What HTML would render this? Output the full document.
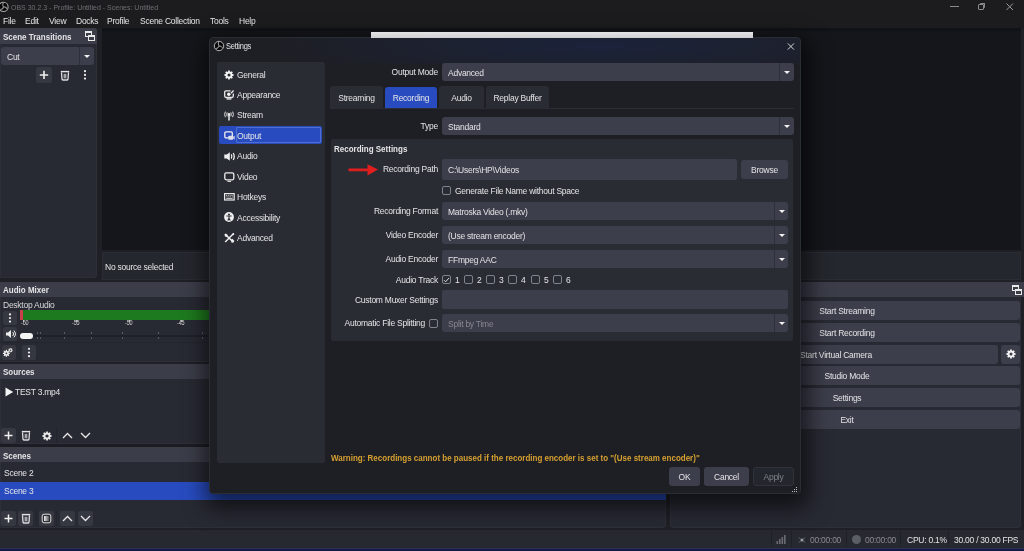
<!DOCTYPE html>
<html><head><meta charset="utf-8">
<style>
*{box-sizing:border-box;margin:0;padding:0}
html,body{-webkit-font-smoothing:antialiased;width:1024px;height:551px;overflow:hidden;background:#1f2026;font-family:"Liberation Sans",sans-serif;font-size:8.5px;letter-spacing:-0.25px;color:#e4e4e6}
.a{position:absolute}
svg.a{overflow:visible}
.t{position:absolute;white-space:nowrap;line-height:10px;will-change:transform;transform:scaleY(1.15);transform-origin:0 45%;margin-top:-1px}
.b{font-weight:bold;font-size:8px;letter-spacing:0;margin-top:1.8px}
.dock{position:absolute;background:#282a33;border:1px solid #2e3039}
.hdr{position:absolute;background:#3b3d49}
.fld{position:absolute;background:#3c3e4b;border-radius:3px}
.btn{position:absolute;background:#3c3e4b;border-radius:3px}
.tb{position:absolute;background:#363841;border-radius:2px}
.arr{position:absolute;width:0;height:0;border-left:3px solid transparent;border-right:3px solid transparent;border-top:3px solid #f2f2f2}
.csep{position:absolute;width:1px;background:#2e3039}
.cb{position:absolute;width:9px;height:9px;border:1px solid #80838b;border-radius:2px}
.ic{position:absolute;overflow:visible}
</style></head><body>

<!-- title + menu bar -->
<div class="a" style="left:0;top:0;width:1024px;height:28px;background:#1c1c1f"></div>
<svg class="a" style="left:0;top:0" width="12" height="14"><circle cx="3.5" cy="6.9" r="4.6" fill="#060606" stroke="#a8a8a8" stroke-width="1.1"/><path d="M3.5 6.9Q2.1 5.1 3.3 2.6M3.5 6.9Q5.9 6.5 7.1 8.9M3.5 6.9Q3.1 9.3 0.3 9.5" stroke="#8c8c8c" stroke-width="1.2" fill="none"/></svg>
<div class="t" style="left:11px;top:3.6px;font-size:7px;letter-spacing:0;color:#707074">OBS 30.2.3 - Profile: Untitled - Scenes: Untitled</div>
<div class="a" style="left:950px;top:6px;width:9px;height:1px;background:#8a8a8a"></div>
<div class="a" style="left:978px;top:4px;width:6px;height:6px;border:1px solid #8a8a8a;border-radius:1px"></div>
<div class="a" style="left:980px;top:3px;width:5px;height:5px;border-top:1px solid #8a8a8a;border-right:1px solid #8a8a8a;border-radius:1px"></div>
<svg class="a" style="left:1006px;top:3px" width="8" height="8" viewBox="0 0 8 8"><path d="M0.5 0.5L7 7M7 0.5L0.5 7" stroke="#9a9a9a" stroke-width="1"/></svg>

<div class="t" style="left:3px;top:16px">File</div>
<div class="t" style="left:25px;top:16px">Edit</div>
<div class="t" style="left:49px;top:16px">View</div>
<div class="t" style="left:76px;top:16px">Docks</div>
<div class="t" style="left:107px;top:16px">Profile</div>
<div class="t" style="left:140px;top:16px">Scene Collection</div>
<div class="t" style="left:210px;top:16px">Tools</div>
<div class="t" style="left:239px;top:16px">Help</div>

<!-- main dark bg -->
<div class="a" style="left:0;top:28px;width:1024px;height:521px;background:#1f2026"></div>

<!-- Scene transitions dock -->
<div class="dock" style="left:0;top:28px;width:97px;height:250px;border-radius:0 3px 3px 0"></div>
<div class="hdr" style="left:0;top:28px;width:97px;height:16px;border-radius:0 3px 0 0"></div>
<div class="t b" style="left:3px;top:31px">Scene Transitions</div>
<svg class="ic" style="left:84px;top:30px" width="12" height="12" viewBox="0 0 12 12"><rect x="1.5" y="1.5" width="6" height="5" fill="none" stroke="#e8e8e8" stroke-width="1"/><rect x="1" y="1" width="7" height="2" fill="#e8e8e8"/><rect x="4.5" y="5.5" width="6" height="5" fill="#3b3d49" stroke="#e8e8e8" stroke-width="1"/><rect x="4" y="5" width="7" height="2" fill="#e8e8e8"/></svg>
<div class="fld" style="left:1px;top:47px;width:93px;height:18px"></div>
<div class="csep" style="left:79px;top:47px;height:18px"></div>
<div class="arr" style="left:84px;top:55px"></div>
<div class="t" style="left:7px;top:52px">Cut</div>
<div class="tb" style="left:36px;top:67px;width:16px;height:16px"></div>
<svg class="ic" style="left:36px;top:67px" width="16" height="16"><path d="M8 3.8V12M3.8 8H12.2" stroke="#f0f0f0" stroke-width="1.6"/></svg>
<svg class="ic" style="left:60px;top:70px" width="10" height="11"><path d="M0.8 1.6H9.2" stroke="#e4e4e6" stroke-width="1.4"/><path d="M1.5 2.4L2 9.2Q2.1 10 2.9 10H7.1Q7.9 10 8 9.2L8.5 2.4" fill="none" stroke="#dcdce0" stroke-width="1.3"/><rect x="3.6" y="3.9" width="2.8" height="4.4" fill="#a4a6ac"/></svg>
<svg class="ic" style="left:83px;top:69px" width="4" height="12"><circle cx="2" cy="2.2" r="1.1" fill="#f0f0f0"/><circle cx="2" cy="5.9" r="1.1" fill="#f0f0f0"/><circle cx="2" cy="9.6" r="1.1" fill="#f0f0f0"/></svg>

<!-- preview -->
<div class="a" style="left:102px;top:28px;width:919px;height:222px;background:#15161b"></div><div class="a" style="left:102px;top:28px;width:919px;height:3px;background:#111217"></div>

<div class="a" style="left:102px;top:252px;width:919px;height:28px;background:#25272e;border:1px solid #2b2d35"></div>
<div class="t" style="left:105px;top:262px">No source selected</div>

<!-- Audio mixer -->
<div class="dock" style="left:0;top:282px;width:666px;height:80px"></div>
<div class="hdr" style="left:0;top:282px;width:666px;height:15px"></div>
<div class="t b" style="left:3px;top:284px">Audio Mixer</div>
<div class="t" style="left:3px;top:300px;color:#d8d8da">Desktop Audio</div>
<div class="tb" style="left:3px;top:311px;width:14px;height:14px"></div>
<svg class="ic" style="left:3px;top:311px" width="14" height="14"><circle cx="7" cy="3.4" r="1.1" fill="#eee"/><circle cx="7" cy="7" r="1.1" fill="#eee"/><circle cx="7" cy="10.6" r="1.1" fill="#eee"/></svg>
<div class="a" style="left:20px;top:310px;width:190px;height:10px;background:#1e7a1e"></div>
<div class="a" style="left:20px;top:310px;width:3px;height:10px;background:#c8404a"></div>
<div class="a" style="left:23px;top:320px;width:1px;height:2px;background:#bbb"></div>
<div class="a" style="left:76px;top:320px;width:1px;height:2px;background:#bbb"></div>
<div class="a" style="left:129px;top:320px;width:1px;height:2px;background:#bbb"></div>
<div class="a" style="left:181px;top:320px;width:1px;height:2px;background:#bbb"></div>
<div class="t" style="left:21px;top:320px;font-size:5.5px;letter-spacing:-0.2px;line-height:8px;color:#d0d0d0">-60</div>
<div class="t" style="left:72px;top:320px;font-size:5.5px;letter-spacing:-0.2px;line-height:8px;color:#d0d0d0">-55</div>
<div class="t" style="left:125px;top:320px;font-size:5.5px;letter-spacing:-0.2px;line-height:8px;color:#d0d0d0">-50</div>
<div class="t" style="left:177px;top:320px;font-size:5.5px;letter-spacing:-0.2px;line-height:8px;color:#d0d0d0">-45</div>
<div class="tb" style="left:3px;top:327px;width:14px;height:14px"></div>
<svg class="ic" style="left:3px;top:327px" width="14" height="14"><path d="M3 5.5H5L8 3V11L5 8.5H3Z" fill="#eee"/><path d="M9.5 5a2.5 2.5 0 0 1 0 4M10.8 3.6a4.4 4.4 0 0 1 0 6.8" stroke="#eee" stroke-width="1" fill="none"/></svg>
<div class="a" style="left:20px;top:335px;width:190px;height:2px;background:#1f2128"></div>
<div class="a" style="left:37px;top:332px;width:1px;height:2px;background:#5a5c64"></div><div class="a" style="left:37px;top:337px;width:1px;height:2px;background:#5a5c64"></div><div class="a" style="left:40px;top:332px;width:1px;height:2px;background:#5a5c64"></div><div class="a" style="left:40px;top:337px;width:1px;height:2px;background:#5a5c64"></div><div class="a" style="left:64px;top:332px;width:1px;height:2px;background:#5a5c64"></div><div class="a" style="left:64px;top:337px;width:1px;height:2px;background:#5a5c64"></div><div class="a" style="left:91px;top:332px;width:1px;height:2px;background:#5a5c64"></div><div class="a" style="left:91px;top:337px;width:1px;height:2px;background:#5a5c64"></div><div class="a" style="left:122px;top:332px;width:1px;height:2px;background:#5a5c64"></div><div class="a" style="left:122px;top:337px;width:1px;height:2px;background:#5a5c64"></div><div class="a" style="left:158px;top:332px;width:1px;height:2px;background:#5a5c64"></div><div class="a" style="left:158px;top:337px;width:1px;height:2px;background:#5a5c64"></div><div class="a" style="left:202px;top:332px;width:1px;height:2px;background:#5a5c64"></div><div class="a" style="left:202px;top:337px;width:1px;height:2px;background:#5a5c64"></div><div class="a" style="left:20px;top:333px;width:13px;height:6px;background:#f4f4f4;border-radius:3px"></div>
<div class="a" style="left:0;top:342px;width:210px;height:1px;background:#23252c"></div>
<div class="tb" style="left:2px;top:344.5px;width:14px;height:15px"></div>
<svg class="ic" style="left:0;top:342px" width="16" height="18"><path d="M8.82 10.66 L9.84 10.67 L9.84 11.93 L8.82 11.94 L8.56 12.56 L9.28 13.29 L8.39 14.18 L7.66 13.46 L7.04 13.72 L7.03 14.74 L5.77 14.74 L5.76 13.72 L5.14 13.46 L4.41 14.18 L3.52 13.29 L4.24 12.56 L3.98 11.94 L2.96 11.93 L2.96 10.67 L3.98 10.66 L4.24 10.04 L3.52 9.31 L4.41 8.42 L5.14 9.14 L5.76 8.88 L5.77 7.86 L7.03 7.86 L7.04 8.88 L7.66 9.14 L8.39 8.42 L9.28 9.31 L8.56 10.04Z M5.50 11.30 a0.90 0.90 0 1 0 1.80 0 a0.90 0.90 0 1 0 -1.80 0Z" fill="#eee" fill-rule="evenodd"/><path d="M12.03 7.73 L12.65 7.75 L12.65 8.65 L12.03 8.67 L11.82 9.11 L12.20 9.60 L11.49 10.16 L11.09 9.69 L10.61 9.80 L10.46 10.40 L9.58 10.20 L9.70 9.59 L9.32 9.28 L8.76 9.54 L8.36 8.73 L8.92 8.44 L8.92 7.96 L8.36 7.67 L8.76 6.86 L9.32 7.12 L9.70 6.81 L9.58 6.20 L10.46 6.00 L10.61 6.60 L11.09 6.71 L11.49 6.24 L12.20 6.80 L11.82 7.29Z M9.70 8.20 a0.80 0.80 0 1 0 1.60 0 a0.80 0.80 0 1 0 -1.60 0Z" fill="#eee" fill-rule="evenodd"/></svg>
<div class="tb" style="left:22px;top:345px;width:14px;height:15px"></div>
<svg class="ic" style="left:22px;top:345px" width="14" height="15"><circle cx="7" cy="3.8" r="1.1" fill="#eee"/><circle cx="7" cy="7.5" r="1.1" fill="#eee"/><circle cx="7" cy="11.2" r="1.1" fill="#eee"/></svg>

<!-- Sources -->
<div class="dock" style="left:0;top:364px;width:666px;height:80px"></div>
<div class="hdr" style="left:0;top:364px;width:666px;height:15px"></div>
<div class="t b" style="left:3px;top:366px">Sources</div>
<svg class="ic" style="left:5px;top:387px" width="10" height="10"><path d="M0.5 0.5L8.2 5L0.5 9.5Z" fill="#f4f4f4"/></svg>
<div class="t" style="left:15px;top:387px">TEST 3.mp4</div>
<div class="tb" style="left:1px;top:428px;width:15px;height:15px"></div>
<svg class="ic" style="left:1px;top:428px" width="15" height="15"><path d="M7.5 3.5V11.5M3.5 7.5H11.5" stroke="#f0f0f0" stroke-width="1.5"/></svg>
<svg class="ic" style="left:20.5px;top:430px" width="10" height="11"><path d="M0.8 1.6H9.2" stroke="#e4e4e6" stroke-width="1.4"/><path d="M1.5 2.4L2 9.2Q2.1 10 2.9 10H7.1Q7.9 10 8 9.2L8.5 2.4" fill="none" stroke="#dcdce0" stroke-width="1.3"/><rect x="3.6" y="3.9" width="2.8" height="4.4" fill="#a4a6ac"/></svg>
<svg class="ic" style="left:41.5px;top:430.5px" width="10" height="10"><path d="M8.38 4.10 L9.62 4.16 L9.62 5.84 L8.38 5.90 L8.03 6.76 L8.87 7.67 L7.67 8.87 L6.76 8.03 L5.90 8.38 L5.84 9.62 L4.16 9.62 L4.10 8.38 L3.24 8.03 L2.33 8.87 L1.13 7.67 L1.97 6.76 L1.62 5.90 L0.38 5.84 L0.38 4.16 L1.62 4.10 L1.97 3.24 L1.13 2.33 L2.33 1.13 L3.24 1.97 L4.10 1.62 L4.16 0.38 L5.84 0.38 L5.90 1.62 L6.76 1.97 L7.67 1.13 L8.87 2.33 L8.03 3.24Z M3.40 5.00 a1.60 1.60 0 1 0 3.20 0 a1.60 1.60 0 1 0 -3.20 0Z" fill="#e8e8e8" fill-rule="evenodd"/></svg>
<div class="a" style="left:56px;top:428px;width:1px;height:15px;background:#23252c"></div>
<svg class="ic" style="left:62px;top:432px" width="11" height="7"><path d="M1 6L5.5 1.5L10 6" stroke="#e8e8e8" stroke-width="1.3" fill="none"/></svg>
<svg class="ic" style="left:80px;top:432px" width="11" height="7"><path d="M1 1L5.5 5.5L10 1" stroke="#e8e8e8" stroke-width="1.3" fill="none"/></svg>
<div class="a" style="left:0;top:444px;width:666px;height:3px;background:#1c1d22"></div>

<!-- Scenes -->
<div class="dock" style="left:0;top:447px;width:666px;height:81px;border-radius:0 0 3px 0"></div>
<div class="hdr" style="left:0;top:447px;width:666px;height:15px"></div>
<div class="t b" style="left:3px;top:450px">Scenes</div>
<div class="t" style="left:4px;top:468px">Scene 2</div>
<div class="a" style="left:0;top:482px;width:666px;height:18px;background:#284cc0"></div>
<div class="t" style="left:4px;top:486px">Scene 3</div>
<div class="tb" style="left:1px;top:511px;width:15px;height:15px"></div>
<svg class="ic" style="left:1px;top:511px" width="15" height="15"><path d="M7.5 3.5V11.5M3.5 7.5H11.5" stroke="#f0f0f0" stroke-width="1.5"/></svg>
<div class="tb" style="left:18px;top:511px;width:15px;height:15px"></div>
<svg class="ic" style="left:20.5px;top:513px" width="10" height="11"><path d="M0.8 1.6H9.2" stroke="#e4e4e6" stroke-width="1.4"/><path d="M1.5 2.4L2 9.2Q2.1 10 2.9 10H7.1Q7.9 10 8 9.2L8.5 2.4" fill="none" stroke="#dcdce0" stroke-width="1.3"/><rect x="3.6" y="3.9" width="2.8" height="4.4" fill="#a4a6ac"/></svg>
<div class="a" style="left:36px;top:511px;width:1px;height:15px;background:#23252c"></div>
<div class="tb" style="left:39px;top:511px;width:15px;height:15px"></div>
<svg class="ic" style="left:39px;top:511px" width="15" height="15"><defs><linearGradient id="g1"><stop offset="0" stop-color="#eee"/><stop offset="1" stop-color="#555"/></linearGradient></defs><rect x="3.2" y="3.2" width="8.6" height="8.6" rx="1.8" fill="#2c2e36" stroke="#e0e0e0" stroke-width="1"/><rect x="5" y="5" width="5" height="5" fill="url(#g1)"/></svg>
<div class="a" style="left:56px;top:511px;width:1px;height:15px;background:#23252c"></div>
<div class="tb" style="left:60px;top:511px;width:15px;height:15px"></div>
<svg class="ic" style="left:62px;top:515px" width="11" height="7"><path d="M1 6L5.5 1.5L10 6" stroke="#e8e8e8" stroke-width="1.3" fill="none"/></svg>
<div class="tb" style="left:78px;top:511px;width:15px;height:15px"></div>
<svg class="ic" style="left:80px;top:515px" width="11" height="7"><path d="M1 1L5.5 5.5L10 1" stroke="#e8e8e8" stroke-width="1.3" fill="none"/></svg>

<!-- Controls -->
<div class="dock" style="left:670px;top:282px;width:351px;height:246px;border-radius:0 0 3px 3px"></div>
<div class="hdr" style="left:670px;top:282px;width:354px;height:15px"></div>
<svg class="ic" style="left:1011px;top:284px" width="12" height="12" viewBox="0 0 12 12"><rect x="1.5" y="1.5" width="6" height="5" fill="none" stroke="#e8e8e8" stroke-width="1"/><rect x="1" y="1" width="7" height="2" fill="#e8e8e8"/><rect x="4.5" y="5.5" width="6" height="5" fill="#3b3d49" stroke="#e8e8e8" stroke-width="1"/><rect x="4" y="5" width="7" height="2" fill="#e8e8e8"/></svg>
<div class="btn" style="left:674px;top:301px;width:346px;height:19px"></div>
<div class="t" style="left:674px;top:306px;width:346px;text-align:center">Start Streaming</div>
<div class="btn" style="left:674px;top:323px;width:346px;height:19px"></div>
<div class="t" style="left:674px;top:328px;width:346px;text-align:center">Start Recording</div>
<div class="btn" style="left:674px;top:345px;width:324px;height:19px"></div>
<div class="t" style="left:674px;top:350px;width:324px;text-align:center">Start Virtual Camera</div>
<div class="btn" style="left:1001px;top:345px;width:19px;height:19px"></div>
<svg class="ic" style="left:1005.5px;top:349px" width="10" height="10"><path d="M8.38 4.10 L9.62 4.16 L9.62 5.84 L8.38 5.90 L8.03 6.76 L8.87 7.67 L7.67 8.87 L6.76 8.03 L5.90 8.38 L5.84 9.62 L4.16 9.62 L4.10 8.38 L3.24 8.03 L2.33 8.87 L1.13 7.67 L1.97 6.76 L1.62 5.90 L0.38 5.84 L0.38 4.16 L1.62 4.10 L1.97 3.24 L1.13 2.33 L2.33 1.13 L3.24 1.97 L4.10 1.62 L4.16 0.38 L5.84 0.38 L5.90 1.62 L6.76 1.97 L7.67 1.13 L8.87 2.33 L8.03 3.24Z M3.50 5.00 a1.50 1.50 0 1 0 3.00 0 a1.50 1.50 0 1 0 -3.00 0Z" fill="#f0f0f0" fill-rule="evenodd"/></svg>
<div class="btn" style="left:674px;top:366px;width:346px;height:19px"></div>
<div class="t" style="left:674px;top:371px;width:346px;text-align:center">Studio Mode</div>
<div class="btn" style="left:674px;top:388px;width:346px;height:19px"></div>
<div class="t" style="left:674px;top:393px;width:346px;text-align:center">Settings</div>
<div class="btn" style="left:674px;top:410px;width:346px;height:19px"></div>
<div class="t" style="left:674px;top:415px;width:346px;text-align:center">Exit</div>

<!-- status bar -->
<div class="a" style="left:0;top:530px;width:1024px;height:18px;background:#272930"></div>
<div class="a" style="left:0;top:548px;width:1024px;height:1px;background:#2c3350"></div><div class="a" style="left:0;top:549px;width:1024px;height:2px;background:#131a48"></div>
<div class="a" style="left:771px;top:531px;width:1px;height:16px;background:#1e2026"></div>
<div class="a" style="left:791px;top:531px;width:1px;height:16px;background:#1e2026"></div>
<div class="a" style="left:846px;top:531px;width:1px;height:16px;background:#1e2026"></div>
<div class="a" style="left:900px;top:531px;width:1px;height:16px;background:#1e2026"></div>
<div class="a" style="left:948px;top:531px;width:1px;height:16px;background:#1e2026"></div>
<svg class="ic" style="left:776px;top:535px" width="11" height="9"><rect x="0.5" y="6" width="1.6" height="3" fill="#6a6c74"/><rect x="3" y="4" width="1.6" height="5" fill="#6a6c74"/><rect x="5.5" y="2" width="1.6" height="7" fill="#6a6c74"/><rect x="8" y="0" width="1.6" height="9" fill="#6a6c74"/></svg>
<svg class="ic" style="left:797px;top:536px" width="10" height="8"><circle cx="5" cy="4" r="1.6" fill="#9a9ca4"/><path d="M2 1.5L3.4 3M8 1.5L6.6 3M2 6.5L3.4 5M8 6.5L6.6 5" stroke="#6a6c74" stroke-width="1"/></svg>
<div class="t" style="left:810px;top:535px;color:#8a8b90">00:00:00</div>
<div class="a" style="left:852px;top:535px;width:9px;height:9px;border-radius:50%;background:#5c5e66"></div>
<div class="t" style="left:865px;top:535px;color:#8a8b90">00:00:00</div>
<div class="t" style="left:907px;top:535px">CPU: 0.1%</div>
<div class="t" style="left:954px;top:535px">30.00 / 30.00 FPS</div>

<!-- SETTINGS DIALOG -->
<div class="a" style="left:209px;top:37px;width:592px;height:457px;background:#1e1f25;border-radius:4px;box-shadow:2px 8px 22px 6px rgba(0,0,0,.6);border:1px solid #2b2d34"></div>
<div class="a" style="left:210px;top:38px;width:590px;height:26px;border-radius:4px 4px 0 0;background:radial-gradient(ellipse 330px 34px at 390px 8px,rgba(26,36,66,.75),rgba(26,36,66,0))"></div>
<svg class="ic" style="left:213px;top:40px" width="12" height="12"><circle cx="6" cy="6" r="4.7" fill="#060606" stroke="#c4c4c4" stroke-width="0.9"/><path d="M6 6Q4.6 4.2 5.8 1.6M6 6Q8.4 5.6 9.6 8M6 6Q5.6 8.4 2.8 8.6" stroke="#b8b8b8" stroke-width="0.9" fill="none"/></svg>
<div class="t" style="left:226px;top:43px;font-size:7.5px">Settings</div>
<svg class="ic" style="left:787px;top:43px" width="8" height="7"><path d="M0.8 0.4L7 6.6M7 0.4L0.8 6.6" stroke="#d8d8d8" stroke-width="1"/></svg>

<div class="a" style="left:217px;top:62px;width:108px;height:401px;background:#2a2c34;border-radius:2px"></div>
<div class="a" style="left:219px;top:126px;width:103px;height:18px;background:#284cc0;border-radius:2px"></div>
<div class="a" style="left:236px;top:127px;width:85px;height:16px;border:1px solid #6a86d8;border-radius:1px;opacity:.6"></div>
<!-- sidebar icons -->
<svg class="ic" style="left:224px;top:69.5px" width="10" height="10"><path d="M8.38 4.10 L9.62 4.16 L9.62 5.84 L8.38 5.90 L8.03 6.76 L8.87 7.67 L7.67 8.87 L6.76 8.03 L5.90 8.38 L5.84 9.62 L4.16 9.62 L4.10 8.38 L3.24 8.03 L2.33 8.87 L1.13 7.67 L1.97 6.76 L1.62 5.90 L0.38 5.84 L0.38 4.16 L1.62 4.10 L1.97 3.24 L1.13 2.33 L2.33 1.13 L3.24 1.97 L4.10 1.62 L4.16 0.38 L5.84 0.38 L5.90 1.62 L6.76 1.97 L7.67 1.13 L8.87 2.33 L8.03 3.24Z M3.50 5.00 a1.50 1.50 0 1 0 3.00 0 a1.50 1.50 0 1 0 -3.00 0Z" fill="#f4f4f4" fill-rule="evenodd"/></svg>
<div class="t" style="left:237px;top:70px">General</div>
<svg class="ic" style="left:224px;top:90px" width="11" height="11"><path d="M6.6 0.9H2Q0.7 0.9 0.7 2.2V6.1Q0.7 7.5 2.1 7.5H7.9Q9.3 7.5 9.3 6.1V3.4" fill="none" stroke="#e8e8e8" stroke-width="1.3"/><path d="M7 3.2L9.6 0.5" stroke="#f0f0f0" stroke-width="1.3"/><circle cx="4.8" cy="4.3" r="1.7" fill="#f4f4f4"/><rect x="2.6" y="8.2" width="4.8" height="1.5" fill="#d8d8d8"/></svg>
<div class="t" style="left:237px;top:90px">Appearance</div>
<svg class="ic" style="left:224px;top:111px" width="11" height="10"><path d="M5 3.4V9.6" stroke="#eee" stroke-width="1.5"/><circle cx="5" cy="3.4" r="1.3" fill="#eee"/><path d="M3.2 1.4Q2.2 3.4 3.2 5.4M6.8 1.4Q7.8 3.4 6.8 5.4M1.4 0.6Q-0.2 3.4 1.4 6.2M8.6 0.6Q10.2 3.4 8.6 6.2" stroke="#e0e0e0" stroke-width="1" fill="none"/></svg>
<div class="t" style="left:237px;top:110px">Stream</div>
<svg class="ic" style="left:224px;top:130.6px" width="11" height="10"><rect x="0.8" y="0.8" width="7.5" height="6" rx="1.2" fill="none" stroke="#eee" stroke-width="1.3"/><rect x="4.2" y="4.8" width="5" height="4" rx="1" fill="#dde" /><path d="M9.2 5.6L10.6 4.8V8.6L9.2 7.8" fill="#dde"/></svg>
<div class="t" style="left:237px;top:131px">Output</div>
<svg class="ic" style="left:224px;top:152px" width="12" height="9"><path d="M0.3 2.6H2.8L5.8 0.2V8.8L2.8 6.4H0.3Z" fill="#f0f0f0"/><path d="M7.3 2.4Q8.5 4.5 7.3 6.6M9.2 1Q11.3 4.5 9.2 8" stroke="#f0f0f0" stroke-width="1.3" fill="none"/></svg>
<div class="t" style="left:237px;top:151px">Audio</div>
<svg class="ic" style="left:224px;top:172px" width="11" height="10"><rect x="0.8" y="0.8" width="9" height="7" rx="1.5" fill="none" stroke="#eee" stroke-width="1.3"/><path d="M3.5 9.4H7" stroke="#eee" stroke-width="1"/></svg>
<div class="t" style="left:237px;top:172px">Video</div>
<svg class="ic" style="left:224px;top:193px" width="11" height="8"><rect x="0.6" y="0.6" width="9.6" height="6.4" fill="#2a2c34" stroke="#e8e8e8" stroke-width="1.2"/><path d="M2 2.4H3M3.8 2.4H4.8M5.6 2.4H6.6M7.4 2.4H8.6M2.6 3.9H3.6M4.4 3.9H5.4M6.2 3.9H7.2M8 3.9H8.8M2.2 5.4H8.6" stroke="#dcdcdc" stroke-width="0.9"/></svg>
<div class="t" style="left:237px;top:192px">Hotkeys</div>
<svg class="ic" style="left:224px;top:212px" width="11" height="11"><circle cx="5" cy="5" r="4.9" fill="#eee"/><circle cx="5" cy="2.4" r="1" fill="#2a2c34"/><path d="M2.4 4H7.6M5 4V6.4M3.8 8.6L5 6.2L6.2 8.6" stroke="#2a2c34" stroke-width="1.1" fill="none"/></svg>
<div class="t" style="left:237px;top:213px">Accessibility</div>
<svg class="ic" style="left:224px;top:232.5px" width="11" height="10"><path d="M2.2 2.2L8.4 8.2" stroke="#eee" stroke-width="1.6"/><path d="M0.4 1.6L1.6 0.4L3.4 1.4L3.6 3.2L2.4 4L1 3.6Z" fill="#eee"/><path d="M7 6.8L8.4 5.8L10 7.4L10.2 8.8L9 9.8L7.4 9.6Z" fill="#eee"/><path d="M9.6 0.6L1.2 9" stroke="#eee" stroke-width="1.4"/><path d="M8.4 0.4L10 0L10.2 1.8L9.2 2.2Z" fill="#eee"/></svg>
<div class="t" style="left:237px;top:233px">Advanced</div>

<div class="t" style="left:330px;top:67px;width:108px;text-align:right">Output Mode</div>
<div class="fld" style="left:442px;top:63px;width:352px;height:18px"></div>
<div class="csep" style="left:779px;top:63px;height:18px"></div>
<div class="arr" style="left:784px;top:71px"></div>
<div class="t" style="left:448px;top:68px">Advanced</div>

<div class="a" style="left:330px;top:108px;width:464px;height:1px;background:#2c2e36"></div>
<div class="a" style="left:330px;top:86px;width:53px;height:23px;background:#2a2c34;border-radius:3px 3px 0 0"></div>
<div class="a" style="left:385px;top:87px;width:52px;height:21px;background:#284cc0;border-radius:3px 3px 0 0"></div>
<div class="a" style="left:439px;top:86px;width:45px;height:23px;background:#2a2c34;border-radius:3px 3px 0 0"></div>
<div class="a" style="left:486px;top:86px;width:63px;height:23px;background:#2a2c34;border-radius:3px 3px 0 0"></div>
<div class="t" style="left:330px;top:93px;width:53px;text-align:center">Streaming</div>
<div class="t" style="left:385px;top:93px;width:52px;text-align:center">Recording</div>
<div class="t" style="left:439px;top:93px;width:45px;text-align:center">Audio</div>
<div class="t" style="left:486px;top:93px;width:63px;text-align:center">Replay Buffer</div>

<div class="t" style="left:330px;top:121px;width:108px;text-align:right">Type</div>
<div class="fld" style="left:442px;top:117px;width:352px;height:18px"></div>
<div class="csep" style="left:779px;top:117px;height:18px"></div>
<div class="arr" style="left:784px;top:125px"></div>
<div class="t" style="left:448px;top:122px">Standard</div>

<div class="a" style="left:331px;top:139px;width:462px;height:202px;background:#2a2c34;border-radius:3px"></div>
<div class="t b" style="left:334px;top:143px">Recording Settings</div>

<svg class="ic" style="left:348px;top:163px" width="32" height="14"><path d="M0.5 5.4H19.5V1.2L30 6.6L19.5 12.6V8.2H0.5Z" fill="#e01e1e"/></svg>
<div class="t" style="left:330px;top:164px;width:108px;text-align:right">Recording Path</div>
<div class="fld" style="left:442px;top:159px;width:295px;height:21px;border-radius:2px"></div>
<div class="t" style="left:448px;top:165px">C:\Users\HP\Videos</div>
<div class="btn" style="left:741px;top:160px;width:47px;height:19px"></div>
<div class="t" style="left:741px;top:165px;width:47px;text-align:center">Browse</div>

<div class="cb" style="left:442px;top:186px"></div>
<div class="t" style="left:455px;top:186px">Generate File Name without Space</div>

<div class="t" style="left:330px;top:206px;width:108px;text-align:right">Recording Format</div>
<div class="fld" style="left:442px;top:202px;width:346px;height:18px"></div>
<div class="csep" style="left:774px;top:202px;height:18px"></div>
<div class="arr" style="left:779px;top:210px"></div>
<div class="t" style="left:448px;top:207px">Matroska Video (.mkv)</div>

<div class="t" style="left:330px;top:230px;width:108px;text-align:right">Video Encoder</div>
<div class="fld" style="left:442px;top:226px;width:346px;height:18px"></div>
<div class="csep" style="left:774px;top:226px;height:18px"></div>
<div class="arr" style="left:779px;top:234px"></div>
<div class="t" style="left:448px;top:231px">(Use stream encoder)</div>

<div class="t" style="left:330px;top:254px;width:108px;text-align:right">Audio Encoder</div>
<div class="fld" style="left:442px;top:250px;width:346px;height:18px"></div>
<div class="csep" style="left:774px;top:250px;height:18px"></div>
<div class="arr" style="left:779px;top:258px"></div>
<div class="t" style="left:448px;top:255px">FFmpeg AAC</div>

<div class="t" style="left:330px;top:275px;width:108px;text-align:right">Audio Track</div>
<div class="cb" style="left:442px;top:275px"></div>
<svg class="ic" style="left:442px;top:275px" width="9" height="9"><path d="M2 5.2L3.6 6.8L7 3" stroke="#e0e0e0" stroke-width="1" fill="none"/></svg>
<div class="t" style="left:455px;top:275px">1</div>
<div class="cb" style="left:464px;top:275px"></div>
<div class="t" style="left:477px;top:275px">2</div>
<div class="cb" style="left:486px;top:275px"></div>
<div class="t" style="left:499px;top:275px">3</div>
<div class="cb" style="left:508px;top:275px"></div>
<div class="t" style="left:521px;top:275px">4</div>
<div class="cb" style="left:531px;top:275px"></div>
<div class="t" style="left:544px;top:275px">5</div>
<div class="cb" style="left:553px;top:275px"></div>
<div class="t" style="left:566px;top:275px">6</div>

<div class="t" style="left:330px;top:295px;width:108px;text-align:right">Custom Muxer Settings</div>
<div class="fld" style="left:442px;top:290px;width:346px;height:19px;border-radius:2px"></div>

<div class="t" style="left:330px;top:318px;width:95px;text-align:right">Automatic File Splitting</div>
<div class="cb" style="left:429px;top:319px"></div>
<div class="fld" style="left:442px;top:314px;width:346px;height:18px"></div>
<div class="csep" style="left:774px;top:314px;height:18px"></div>
<div class="arr" style="left:779px;top:322px"></div>
<div class="t" style="left:448px;top:319px;color:#85868d">Split by Time</div>

<div class="t b" style="left:331px;top:452px;color:#d6a030">Warning: Recordings cannot be paused if the recording encoder is set to "(Use stream encoder)"</div>

<div class="btn" style="left:669px;top:467px;width:31px;height:19px"></div>
<div class="t" style="left:669px;top:472px;width:31px;text-align:center">OK</div>
<div class="btn" style="left:704px;top:467px;width:45px;height:19px"></div>
<div class="t" style="left:704px;top:472px;width:45px;text-align:center">Cancel</div>
<div class="btn" style="left:753px;top:467px;width:41px;height:19px;background:#24262d;border:1px solid #31333b"></div>
<div class="t" style="left:753px;top:472px;width:41px;text-align:center;color:#7e8087">Apply</div>
<svg class="ic" style="left:792px;top:487px" width="6" height="6"><rect x="4" y="0" width="1" height="1" fill="#bbb"/><rect x="2" y="2" width="1" height="1" fill="#bbb"/><rect x="4" y="2" width="1" height="1" fill="#bbb"/><rect x="0" y="4" width="1" height="1" fill="#bbb"/><rect x="2" y="4" width="1" height="1" fill="#bbb"/><rect x="4" y="4" width="1" height="1" fill="#bbb"/></svg>

<div class="a" style="left:371px;top:32px;width:382px;height:6px;background:linear-gradient(#e4e4e6,#cfcfd2)"></div>
</body></html>
